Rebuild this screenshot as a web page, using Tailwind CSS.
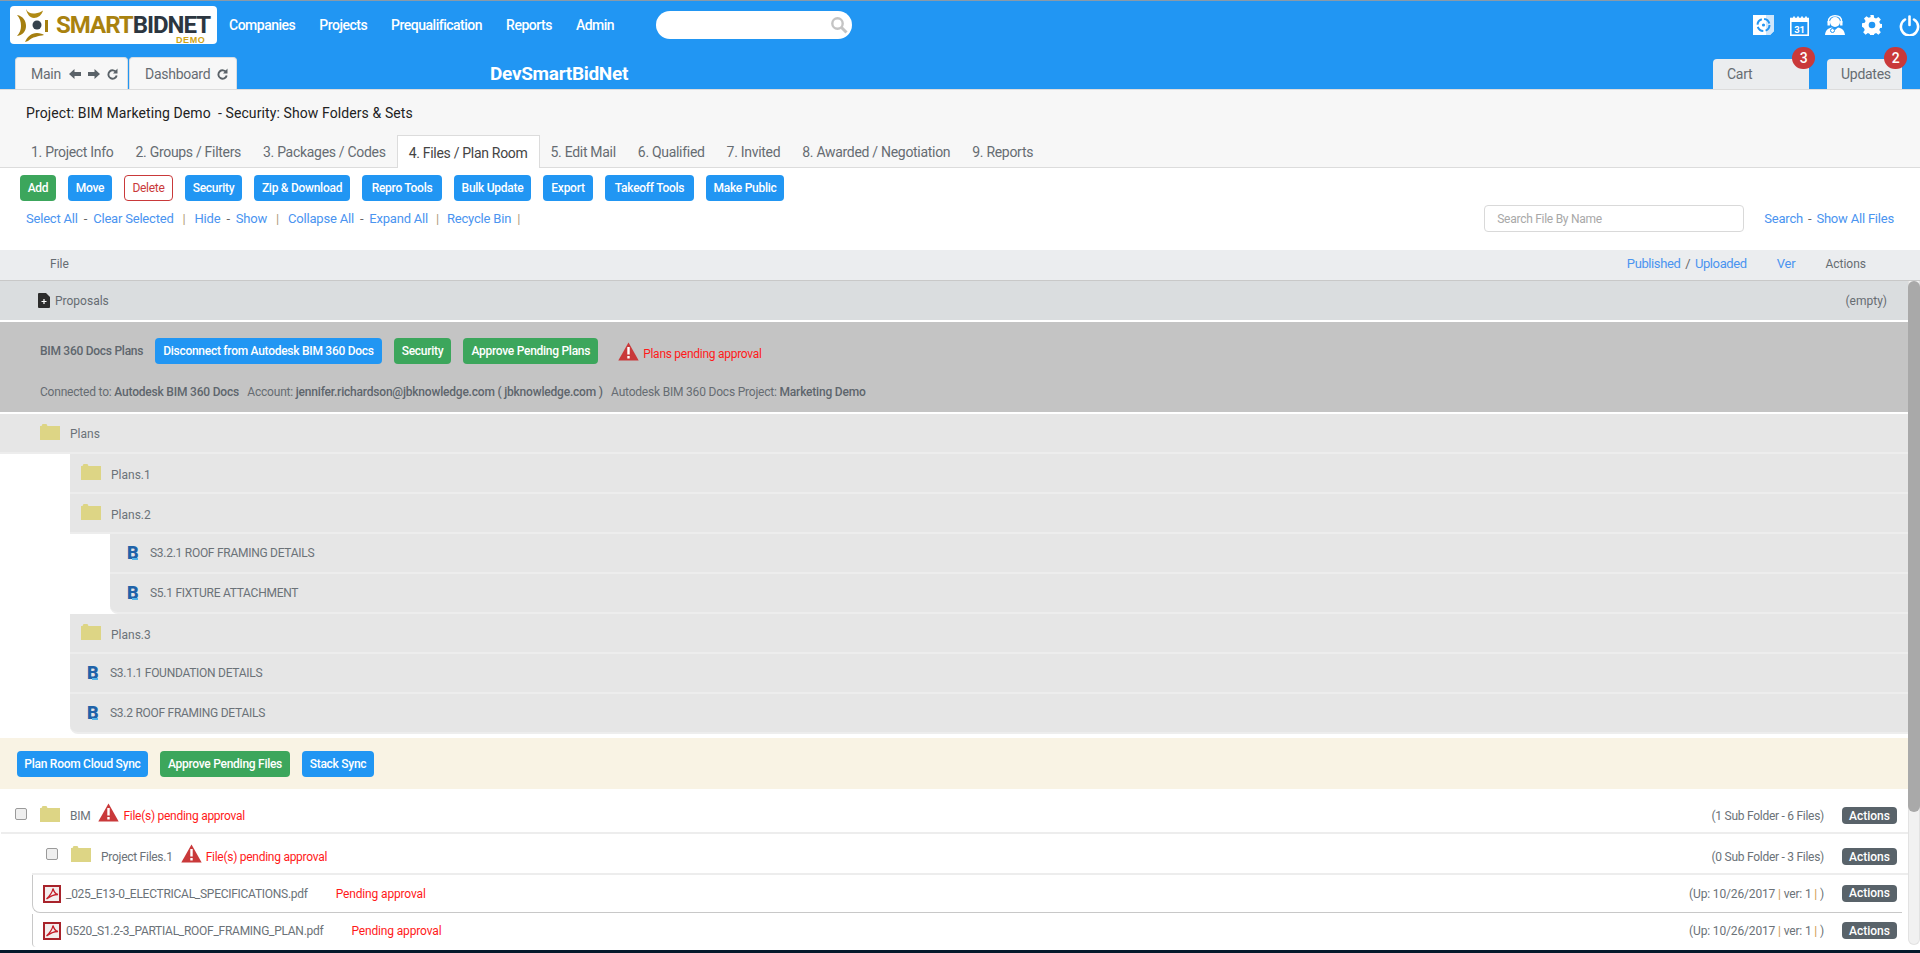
<!DOCTYPE html>
<html>
<head>
<meta charset="utf-8">
<title>SmartBidNet</title>
<script src="https://cdn.jsdelivr.net/npm/@tailwindcss/browser@4"></script>
</head>
<body class="bg-white">
<div class="w-[1920px] h-[953px] overflow-hidden flex flex-col font-['Roboto',sans-serif] text-xs tracking-[-0.27px] text-[#6b7278]">

  <!-- Header -->
  <header class="h-[89px] shrink-0 bg-[#2196f3] border-t border-[#8a9aa8] flex flex-col">
    <div class="h-[38px] mt-[5px] flex items-center">
      <div class="ml-[10px] w-[207px] h-[38px] shrink-0 bg-white rounded-sm flex items-center relative">
        <svg class="ml-[7px] w-[32px] h-[33px] shrink-0" viewBox="0 0 32 33">
          <circle cx="20" cy="16" r="4.500" fill="#36424c"/>
          <path d="M9 0C11 4 14 5 18 4.500C21 4 24 3 26 1.500C25 6 21 9 17 9C13 9 10 5 9 0Z" fill="#b08a14"/>
          <path d="M0 6C6 7 9 12 9 17C9 22 6 26 0 27C3 24 4 20 4 17C4 13 3 9 0 6Z" fill="#a57f10"/>
          <path d="M8 33C10 28 14 24 20 24C23 24 26 25 27 26C22 27 15 28 11 32Z" fill="#a57f10"/>
          <rect x="28" y="11" width="3" height="12" fill="#a57f10"/>
        </svg>
        <div class="ml-[7px] flex h-[18px] font-bold text-[24px] leading-[18px] tracking-[-1px] text-[#a9820f]"><span class="block h-[18px]">SMART</span><span class="block h-[18px] text-[#2c3640]">BIDNET</span></div>
        <span class="absolute left-[166px] top-[30px] font-['Liberation_Sans',sans-serif] font-bold text-[9px] leading-none tracking-[0.6px] text-[#cfa415]">DEMO</span>
      </div>
      <nav class="ml-[12px] flex gap-[24px] text-sm font-medium tracking-[-0.5px] text-white">
        <span>Companies</span><span>Projects</span><span>Prequalification</span><span>Reports</span><span>Admin</span>
      </nav>
      <div class="ml-[42px] w-[196px] h-[28px] rounded-full bg-white flex items-center justify-end pr-[4px]">
        <svg class="w-[18px] h-[18px]" viewBox="0 0 18 18" fill="none" stroke="#c4c4c4" stroke-width="2.400"><circle cx="7.500" cy="7.500" r="5.200"/><path d="M11.500 11.500 L16.500 16.500" stroke-width="3"/></svg>
      </div>
      <div class="ml-auto flex items-center text-white">
        <svg class="w-[21px] h-[20px]" viewBox="0 0 21 20"><path d="M0 0H21V16L17 20H0Z" fill="#fff"/><path d="M13 0H21V16L17 20H13Z" fill="#cfe6fb"/><circle cx="10.500" cy="10" r="6" fill="none" stroke="#2196f3" stroke-width="2" stroke-dasharray="7 2.400"/><circle cx="10.500" cy="10" r="1.600" fill="#2196f3"/></svg>
        <svg class="ml-[16px] w-[19px] h-[21px]" viewBox="0 0 19 21"><rect x="0.800" y="3.500" width="17.400" height="16.700" fill="#2196f3" stroke="#fff" stroke-width="1.600"/><rect x="0" y="3" width="19" height="4" fill="#fff"/><path d="M4 5V1.500M8 5V1.500M12 5V1.500M16 5V1.500" stroke="#fff" stroke-width="1.800"/><text x="9.500" y="17.500" text-anchor="middle" font-family="Roboto" font-weight="700" font-size="9.500" fill="#fff">31</text></svg>
        <svg class="ml-[16px] w-[20px] h-[20px]" viewBox="0 0 20 20"><circle cx="10" cy="7" r="5" fill="#fff"/><path d="M3.500 8V6.500C3.500 2.500 6.500 .8 10 .8S16.500 2.500 16.500 6.500V8" fill="none" stroke="#fff" stroke-width="1.400"/><rect x="2.500" y="6" width="2.400" height="4.500" fill="#fff"/><rect x="15.100" y="6" width="2.400" height="4.500" fill="#fff"/><path d="M0 20C.5 15 3.500 13 7 12.500L10 15L13 12.500C16.500 13 19.500 15 20 20Z" fill="#fff"/><circle cx="7.500" cy="15.500" r="2" fill="none" stroke="#2196f3" stroke-width="1"/></svg>
        <svg class="ml-[17px] w-[20px] h-[20px]" viewBox="0 0 24 24" fill="#fff"><path fill-rule="evenodd" d="M10 0h4l.6 3.300 2.300 1 2.800-1.900 2.900 2.900-1.900 2.800 1 2.300 3.300.6v4l-3.300.6-1 2.300 1.900 2.800-2.900 2.900-2.800-1.900-2.300 1-.6 3.300h-4l-.6-3.300-2.300-1-2.800 1.900-2.900-2.900 1.900-2.800-1-2.300L0 14v-4l3.300-.6 1-2.300-1.900-2.800 2.900-2.900 2.800 1.900 2.300-1zM12 8a4 4 0 1 0 0 8 4 4 0 0 0 0-8z"/></svg>
        <svg class="ml-[17px] w-[21px] h-[21px]" viewBox="0 0 21 21" fill="none" stroke="#fff" stroke-width="2.600" stroke-linecap="round"><path d="M6 4.500A8.600 8.600 0 1 0 15 4.500"/><path d="M10.500 1.500V10"/></svg>
      </div>
    </div>
    <div class="h-[32px] mt-[13px] flex items-end text-sm">
      <div class="ml-[15px] w-[113px] h-[32px] bg-[#f7f7f7] border border-b-0 border-[#d8dde2] rounded-t-sm flex items-center pl-[15px] text-[#666c72]">
        <span>Main</span>
        <svg class="ml-[8px] w-[12px] h-[12px]" viewBox="0 0 12 12" fill="#5a6268"><path d="M0 6L5.500 1V4H12V8H5.500V11Z"/></svg>
        <svg class="ml-[7px] w-[12px] h-[12px]" viewBox="0 0 12 12" fill="#5a6268"><path d="M12 6L6.500 1V4H0V8H6.500V11Z"/></svg>
        <svg class="ml-[7px] w-[11px] h-[12px]" viewBox="0 0 11 12" fill="none"><path d="M9.300 4.500A4.200 4.200 0 1 0 9.700 7.500" stroke="#5a6268" stroke-width="1.900"/><path d="M10.500 0.500V5.500H6Z" fill="#5a6268"/></svg>
      </div>
      <div class="ml-px w-[108px] h-[32px] bg-[#f7f7f7] border border-b-0 border-[#d8dde2] rounded-t-sm flex items-center pl-[15px] text-[#666c72]">
        <span>Dashboard</span>
        <svg class="ml-[7px] w-[11px] h-[12px]" viewBox="0 0 11 12" fill="none"><path d="M9.300 4.500A4.200 4.200 0 1 0 9.700 7.500" stroke="#5a6268" stroke-width="1.900"/><path d="M10.500 0.500V5.500H6Z" fill="#5a6268"/></svg>
      </div>
      <div class="ml-[253px] self-center text-[19px] tracking-[-0.3px] leading-none font-bold text-white">DevSmartBidNet</div>
      <div class="ml-auto relative w-[96px] h-[30px] bg-[#ebedef] rounded-t-sm flex items-center pl-[14px] text-[#666c72]">Cart
        <span class="absolute right-[-6px] top-[-12px] w-[23px] h-[22px] rounded-full bg-[#c9393a] text-white text-sm font-medium flex items-center justify-center">3</span>
      </div>
      <div class="ml-[18px] mr-[18px] relative w-[75px] h-[30px] bg-[#ebedef] rounded-t-sm flex items-center pl-[14px] text-[#666c72]">Updates
        <span class="absolute right-[-5px] top-[-12px] w-[23px] h-[22px] rounded-full bg-[#c9393a] text-white text-sm font-medium flex items-center justify-center">2</span>
      </div>
    </div>
  </header>

  <!-- Project band -->
  <section class="h-[79px] shrink-0 bg-[#f7f7f7] border-t border-b border-[#dcdcdc] flex flex-col">
    <div class="h-[46px] pl-[26px] flex items-center text-sm tracking-[0.1px] text-[#222]">Project: BIM Marketing Demo &nbsp;- Security: Show Folders &amp; Sets</div>
    <div class="h-[32px] pl-[20px] flex text-sm tracking-[-0.3px] text-[#666c72]">
      <span class="px-[11px] h-[32px] pt-[2px] flex items-center">1. Project Info</span>
      <span class="px-[11px] h-[32px] pt-[2px] flex items-center">2. Groups / Filters</span>
      <span class="px-[11px] h-[32px] pt-[2px] flex items-center">3. Packages / Codes</span>
      <span class="px-[11px] h-[33px] pt-[1px] flex items-center bg-white border border-b-0 border-[#dcdcdc] text-[#444]">4. Files / Plan Room</span>
      <span class="px-[11px] h-[32px] pt-[2px] flex items-center">5. Edit Mail</span>
      <span class="px-[11px] h-[32px] pt-[2px] flex items-center">6. Qualified</span>
      <span class="px-[11px] h-[32px] pt-[2px] flex items-center">7. Invited</span>
      <span class="px-[11px] h-[32px] pt-[2px] flex items-center">8. Awarded / Negotiation</span>
      <span class="px-[11px] h-[32px] pt-[2px] flex items-center">9. Reports</span>
    </div>
  </section>

  <!-- Toolbar -->
  <section class="h-[82px] shrink-0 bg-white flex flex-col pt-[7px]">
    <div class="pl-[20px] flex gap-[12px] font-medium">
      <button class="h-[26px] w-[36px] rounded-sm bg-[#3ca65c] text-white">Add</button>
      <button class="h-[26px] w-[44px] rounded-sm bg-[#2196f3] text-white">Move</button>
      <button class="h-[26px] w-[49px] rounded-sm bg-white border border-[#c9393a] text-[#c9393a] font-normal">Delete</button>
      <button class="h-[26px] w-[57px] rounded-sm bg-[#2196f3] text-white">Security</button>
      <button class="h-[26px] w-[96px] rounded-sm bg-[#2196f3] text-white">Zip &amp; Download</button>
      <button class="h-[26px] w-[80px] rounded-sm bg-[#2196f3] text-white">Repro Tools</button>
      <button class="h-[26px] w-[77px] rounded-sm bg-[#2196f3] text-white">Bulk Update</button>
      <button class="h-[26px] w-[50px] rounded-sm bg-[#2196f3] text-white">Export</button>
      <button class="h-[26px] w-[89px] rounded-sm bg-[#2196f3] text-white">Takeoff Tools</button>
      <button class="h-[26px] w-[78px] rounded-sm bg-[#2196f3] text-white">Make Public</button>
    </div>
    <div class="mt-[4px] h-[27px] pl-[26px] flex items-center text-[13px] tracking-[-0.2px] text-[#4a94f0]">
      <span>Select All</span><span class="mx-[6px] text-[#666]">-</span><span>Clear Selected</span><span class="mx-[9px] text-[#b09a7a]">|</span><span>Hide</span><span class="mx-[6px] text-[#666]">-</span><span>Show</span><span class="mx-[9px] text-[#b09a7a]">|</span><span>Collapse All</span><span class="mx-[6px] text-[#666]">-</span><span>Expand All</span><span class="mx-[8px] text-[#b09a7a]">|</span><span>Recycle Bin</span><span class="ml-[6px] text-[#b09a7a]">|</span>
      <div class="ml-auto w-[260px] h-[27px] bg-white border border-[#d9d9d9] rounded-sm flex items-center pl-[12px] text-xs tracking-[-0.27px] text-[#a8a8a8]">Search File By Name</div>
      <span class="ml-[20px]">Search</span><span class="mx-[5px] text-[#666]">-</span><span class="mr-[26px]">Show All Files</span>
    </div>
  </section>

  <!-- Column header -->
  <div class="h-[31px] shrink-0 bg-[#ebedef] border-b border-[#c8c8c8] flex items-center pl-[50px] pb-[3px] text-[#666c72] tracking-normal">
    <span>File</span>
    <span class="ml-auto text-[13px] tracking-[-0.4px] text-[#4a94f0]">Published <span class="mx-[2px] text-[#666]">/</span> Uploaded</span>
    <span class="ml-[30px] text-[13px] tracking-[-0.2px] text-[#4a94f0]">Ver</span>
    <span class="ml-[30px] mr-[54px]">Actions</span>
  </div>

  <!-- Scroll area -->
  <div class="flex-1 min-h-0 flex">
    <div class="flex-1 min-w-0 flex flex-col">
      <div class="h-[39px] shrink-0 bg-[#dadddf] flex items-center pl-[38px] text-[#666c72] tracking-normal">
        <svg class="w-[12px] h-[15px]" viewBox="0 0 12 15"><path d="M0 1Q0 0 1 0H8L12 4V14Q12 15 11 15H1Q0 15 0 14Z" fill="#2c2c2c"/><path d="M6 6V11M3.500 8.500H8.500" stroke="#fff" stroke-width="1.200"/></svg>
        <span class="ml-[5px]">Proposals</span>
        <span class="ml-auto mr-[21px]">(empty)</span>
      </div>

      <div class="h-[90px] mt-[2px] shrink-0 bg-[#c4c4c4] flex flex-col pl-[40px]">
        <div class="mt-[16px] h-[26px] flex items-center">
          <span class="font-medium text-[#5e666d]">BIM 360 Docs Plans</span>
          <button class="ml-[12px] h-[26px] px-[8px] rounded-sm bg-[#2196f3] text-white font-medium">Disconnect from Autodesk BIM 360 Docs</button>
          <button class="ml-[12px] h-[26px] px-[8px] rounded-sm bg-[#3ca65c] text-white font-medium">Security</button>
          <button class="ml-[12px] h-[26px] px-[8px] rounded-sm bg-[#3ca65c] text-white font-medium">Approve Pending Plans</button>
          <svg class="ml-[20px] w-[21px] h-[19px]" viewBox="0 0 21 19"><path d="M10.500 0.500L20.700 18.500H.3Z" fill="#c9393a"/><path d="M10.500 5V12.500M10.500 14V16.500" stroke="#fff" stroke-width="2.400"/></svg>
          <span class="ml-[4px] mt-[6px] text-[#ff1a1a]">Plans pending approval</span>
        </div>
        <div class="mt-[20px] tracking-[-0.2px] text-[#666c72]">Connected to: <span class="font-medium text-[#5e666d]">Autodesk BIM 360 Docs</span> &nbsp; Account: <span class="font-medium text-[#5e666d]">jennifer.richardson@jbknowledge.com ( jbknowledge.com )</span> &nbsp; Autodesk BIM 360 Docs Project: <span class="font-medium text-[#5e666d]">Marketing Demo</span></div>
      </div>

      <div class="mt-[2px] shrink-0 flex flex-col">
        <div class="h-[40px] bg-[#e6e6e6] border-b-2 border-[#ededed] flex items-center pl-[40px]">
          <svg class="w-[20px] h-[16px] mb-[2px]" viewBox="0 0 20 16"><path d="M0 2H1.500L2.500 0H6.500L7.500 2H20V16H0Z" fill="#ddd585"/></svg>
          <span class="ml-[10px] mt-[2px] tracking-normal">Plans</span>
        </div>
        <div class="ml-[70px] h-[40px] bg-[#e6e6e6] border-b-2 border-[#ededed] flex items-center pl-[11px]">
          <svg class="w-[20px] h-[16px] mb-[2px]" viewBox="0 0 20 16"><path d="M0 2H1.500L2.500 0H6.500L7.500 2H20V16H0Z" fill="#ddd585"/></svg>
          <span class="ml-[10px] mt-[3px] tracking-normal">Plans.1</span>
        </div>
        <div class="ml-[70px] h-[40px] bg-[#e6e6e6] border-b-2 border-[#ededed] flex items-center pl-[11px]">
          <svg class="w-[20px] h-[16px] mb-[2px]" viewBox="0 0 20 16"><path d="M0 2H1.500L2.500 0H6.500L7.500 2H20V16H0Z" fill="#ddd585"/></svg>
          <span class="ml-[10px] mt-[3px] tracking-normal">Plans.2</span>
        </div>
        <div class="ml-[110px] h-[40px] bg-[#e6e6e6] border-b-2 border-[#ededed] flex items-center pl-[17px]">
          <span class="relative w-[13px] font-black text-[18px] leading-none tracking-normal text-[#1f63a8]">B<span class="absolute left-[5px] top-[14px] w-[6px] h-[2px] bg-[#54b3e6]"></span></span>
          <span class="ml-[10px]">S3.2.1 ROOF FRAMING DETAILS</span>
        </div>
        <div class="ml-[110px] h-[40px] bg-[#e6e6e6] border-b-2 border-[#ededed] rounded-bl-lg flex items-center pl-[17px]">
          <span class="relative w-[13px] font-black text-[18px] leading-none tracking-normal text-[#1f63a8]">B<span class="absolute left-[5px] top-[14px] w-[6px] h-[2px] bg-[#54b3e6]"></span></span>
          <span class="ml-[10px]">S5.1 FIXTURE ATTACHMENT</span>
        </div>
        <div class="ml-[70px] h-[40px] bg-[#e6e6e6] border-b-2 border-[#ededed] flex items-center pl-[11px]">
          <svg class="w-[20px] h-[16px] mb-[2px]" viewBox="0 0 20 16"><path d="M0 2H1.500L2.500 0H6.500L7.500 2H20V16H0Z" fill="#ddd585"/></svg>
          <span class="ml-[10px] mt-[3px] tracking-normal">Plans.3</span>
        </div>
        <div class="ml-[70px] h-[40px] bg-[#e6e6e6] border-b-2 border-[#ededed] flex items-center pl-[17px]">
          <span class="relative w-[13px] font-black text-[18px] leading-none tracking-normal text-[#1f63a8]">B<span class="absolute left-[5px] top-[14px] w-[6px] h-[2px] bg-[#54b3e6]"></span></span>
          <span class="ml-[10px]">S3.1.1 FOUNDATION DETAILS</span>
        </div>
        <div class="ml-[70px] h-[40px] bg-[#e6e6e6] border-b-2 border-[#ededed] rounded-bl-lg flex items-center pl-[17px]">
          <span class="relative w-[13px] font-black text-[18px] leading-none tracking-normal text-[#1f63a8]">B<span class="absolute left-[5px] top-[14px] w-[6px] h-[2px] bg-[#54b3e6]"></span></span>
          <span class="ml-[10px]">S3.2 ROOF FRAMING DETAILS</span>
        </div>
      </div>

      <div class="mt-[4px] h-[51px] shrink-0 bg-[#f9f3e4] flex items-center pl-[17px] gap-[12px] font-medium">
        <button class="h-[26px] w-[131px] rounded-sm bg-[#2196f3] text-white">Plan Room Cloud Sync</button>
        <button class="h-[26px] w-[130px] rounded-sm bg-[#3ca65c] text-white">Approve Pending Files</button>
        <button class="h-[26px] w-[72px] rounded-sm bg-[#2196f3] text-white">Stack Sync</button>
      </div>

      <!-- BIM folder row -->
      <div class="h-[45px] shrink-0 border-b-2 border-[#ededed] ml-px flex items-center">
        <span class="ml-[14px] mt-[6px] w-[12px] h-[12px] rounded-[2px] border border-[#9a9a9a] bg-[#efefef]"></span>
        <svg class="ml-[13px] mt-[6px] w-[20px] h-[16px]" viewBox="0 0 20 16"><path d="M0 2H1.500L2.500 0H6.500L7.500 2H20V16H0Z" fill="#ddd585"/></svg>
        <span class="ml-[10px] mt-[11px]">BIM</span>
        <svg class="ml-[8px] mt-[4px] w-[21px] h-[19px]" viewBox="0 0 21 19"><path d="M10.500 0.500L20.700 18.500H.3Z" fill="#c9393a"/><path d="M10.500 5V12.500M10.500 14V16.500" stroke="#fff" stroke-width="2.400"/></svg>
        <span class="ml-[4px] mt-[11px] text-[#ff1a1a]">File(s) pending approval</span>
        <span class="ml-auto mt-[11px]">(1 Sub Folder - 6 Files)</span>
        <span class="ml-[18px] mr-[11px] w-[55px] h-[17px] mt-[10px] rounded-sm bg-[#59636a] text-white font-medium tracking-normal flex items-center justify-center">Actions</span>
      </div>

      <!-- Project Files row -->
      <div class="h-[41px] shrink-0 border-b-2 border-[#ededed] ml-[32px] flex items-center">
        <span class="ml-[14px] mt-[1px] w-[12px] h-[12px] rounded-[2px] border border-[#9a9a9a] bg-[#efefef]"></span>
        <svg class="ml-[13px] mt-[1px] w-[20px] h-[16px]" viewBox="0 0 20 16"><path d="M0 2H1.500L2.500 0H6.500L7.500 2H20V16H0Z" fill="#ddd585"/></svg>
        <span class="ml-[10px] mt-[7px]">Project Files.1</span>
        <svg class="ml-[8px] w-[21px] h-[19px]" viewBox="0 0 21 19"><path d="M10.500 0.500L20.700 18.500H.3Z" fill="#c9393a"/><path d="M10.500 5V12.500M10.500 14V16.500" stroke="#fff" stroke-width="2.400"/></svg>
        <span class="ml-[4px] mt-[7px] text-[#ff1a1a]">File(s) pending approval</span>
        <span class="ml-auto mt-[7px]">(0 Sub Folder - 3 Files)</span>
        <span class="ml-[18px] mr-[11px] w-[55px] h-[17px] mt-[6px] rounded-sm bg-[#59636a] text-white font-medium tracking-normal flex items-center justify-center">Actions</span>
      </div>

      <!-- File rows -->
      <div class="h-[38px] shrink-0 ml-[32px] mr-[6px] border-l border-b border-[#c8c8c8] rounded-bl-lg flex items-center">
        <svg class="ml-[10px] w-[18px] h-[18px]" viewBox="0 0 18 18"><rect x="1" y="1" width="16" height="16" fill="#f4eeee" stroke="#a8232b" stroke-width="2"/><path d="M3.500 14C6.500 11 9.500 7 10 3.500C11 7.500 12.500 9 15 9.500C11 9.500 7.500 11 3.500 14Z" fill="none" stroke="#c5202b" stroke-width="1.300"/></svg>
        <span class="ml-[5px]">_025_E13-0_ELECTRICAL_SPECIFICATIONS.pdf</span>
        <span class="ml-[28px] tracking-[-0.15px] text-[#ff1a1a]">Pending approval</span>
        <span class="ml-auto tracking-[-0.15px]">(Up: 10/26/2017 <span class="text-[#d09a50]">|</span> ver: 1 <span class="text-[#d09a50]">|</span> )</span>
        <span class="ml-[18px] mr-[5px] w-[55px] h-[17px] mb-[1px] rounded-sm bg-[#59636a] text-white font-medium tracking-normal flex items-center justify-center">Actions</span>
      </div>
      <div class="h-[33px] shrink-0 mt-px ml-[32px] mr-[6px] border-l border-[#c8c8c8] rounded-bl-sm flex items-center">
        <svg class="ml-[10px] w-[18px] h-[18px]" viewBox="0 0 18 18"><rect x="1" y="1" width="16" height="16" fill="#f4eeee" stroke="#a8232b" stroke-width="2"/><path d="M3.500 14C6.500 11 9.500 7 10 3.500C11 7.500 12.500 9 15 9.500C11 9.500 7.500 11 3.500 14Z" fill="none" stroke="#c5202b" stroke-width="1.300"/></svg>
        <span class="ml-[5px]">0520_S1.2-3_PARTIAL_ROOF_FRAMING_PLAN.pdf</span>
        <span class="ml-[28px] tracking-[-0.15px] text-[#ff1a1a]">Pending approval</span>
        <span class="ml-auto tracking-[-0.15px]">(Up: 10/26/2017 <span class="text-[#d09a50]">|</span> ver: 1 <span class="text-[#d09a50]">|</span> )</span>
        <span class="ml-[18px] mr-[5px] w-[55px] h-[17px] rounded-sm bg-[#59636a] text-white font-medium tracking-normal flex items-center justify-center">Actions</span>
      </div>
    </div>

    <!-- Scrollbar -->
    <div class="w-[12px] shrink-0 flex flex-col">
      <div class="h-[664px] rounded-b-lg bg-[#f1f1f1] border-x border-b border-[#e2e2e2]">
        <div class="h-[531px] -mx-px rounded-full bg-[#a9a9a9]"></div>
      </div>
    </div>
  </div>

  <div class="h-[3px] shrink-0 bg-[#03192b]"></div>
</div>
</body>
</html>
